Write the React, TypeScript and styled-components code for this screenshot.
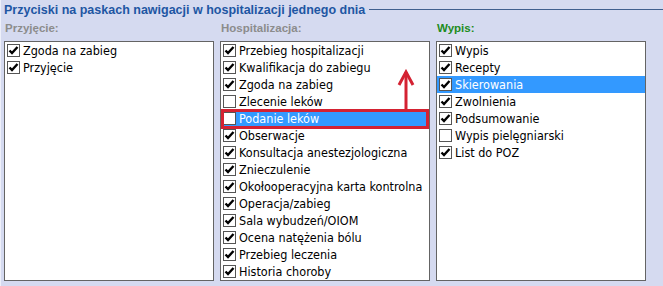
import React from "react";
import styled, { createGlobalStyle } from "styled-components";

const GlobalStyle = createGlobalStyle`
  html, body {
    margin: 0;
    padding: 0;
    background: #d5daf0;
  }
  body {
    font-family: Tahoma, "Liberation Sans", Arial, sans-serif;
    font-size: 12px;
    color: #000;
  }
`;

type Item = { label: string; checked: boolean; selected?: boolean };

const przyjecie: Item[] = [
  { label: "Zgoda na zabieg", checked: true },
  { label: "Przyjęcie", checked: true },
];

const hospitalizacja: Item[] = [
  { label: "Przebieg hospitalizacji", checked: true },
  { label: "Kwalifikacja do zabiegu", checked: true },
  { label: "Zgoda na zabieg", checked: true },
  { label: "Zlecenie leków", checked: false },
  { label: "Podanie leków", checked: false, selected: true },
  { label: "Obserwacje", checked: true },
  { label: "Konsultacja anestezjologiczna", checked: true },
  { label: "Znieczulenie", checked: true },
  { label: "Okołooperacyjna karta kontrolna", checked: true },
  { label: "Operacja/zabieg", checked: true },
  { label: "Sala wybudzeń/OIOM", checked: true },
  { label: "Ocena natężenia bólu", checked: true },
  { label: "Przebieg leczenia", checked: true },
  { label: "Historia choroby", checked: true },
];

const wypis: Item[] = [
  { label: "Wypis", checked: true },
  { label: "Recepty", checked: true },
  { label: "Skierowania", checked: true, selected: true },
  { label: "Zwolnienia", checked: true },
  { label: "Podsumowanie", checked: true },
  { label: "Wypis pielęgniarski", checked: false },
  { label: "List do POZ", checked: true },
];

const Panel = styled.div`
  width: 663px;
  height: 286px;
  box-sizing: border-box;
  padding: 3px 0 0 3px;
  border-left: 1px solid #eef0fa;
`;

const GroupHeader = styled.div`
  display: flex;
  align-items: center;
  height: 13px;
`;

const GroupTitle = styled.span`
  font-family: "Liberation Sans", Arial, sans-serif;
  font-weight: bold;
  font-size: 12.5px;
  color: #1e56a3;
  white-space: nowrap;
`;

const GroupLine = styled.div`
  flex: 1;
  height: 1px;
  margin-left: 4px;
  background: #3f5f8f;
`;

const Columns = styled.div`
  display: grid;
  grid-template-columns: repeat(3, 210px);
  column-gap: 6px;
  margin-top: 6px;
`;

const Column = styled.div`
  display: flex;
  flex-direction: column;
`;

const ColumnLabel = styled.div<{ $tone: "grey" | "green" }>`
  font-family: "Liberation Sans", Arial, sans-serif;
  font-weight: bold;
  font-size: 11.5px;
  height: 13px;
  line-height: 13px;
  padding-left: 1px;
  margin-bottom: 6px;
  color: ${(p) => (p.$tone === "green" ? "#1d8c1d" : "#8c8c8c")};
`;

const ListBox = styled.div`
  position: relative;
  height: 240px;
  box-sizing: border-box;
  border: 1px solid #646464;
  background: #fff;
`;

const Row = styled.div<{ $selected?: boolean }>`
  display: flex;
  align-items: center;
  height: 17px;
  padding-left: 2px;
  background: ${(p) => (p.$selected ? "#3399ff" : "transparent")};
  color: ${(p) => (p.$selected ? "#fff" : "#000")};
`;

const Box = styled.span`
  display: inline-flex;
  align-items: center;
  justify-content: center;
  width: 13px;
  height: 13px;
  box-sizing: border-box;
  border: 1px solid #555;
  background: #fff;
  flex-shrink: 0;
`;

const RowText = styled.span`
  margin-left: 3px;
  font-family: Tahoma, "DejaVu Sans Condensed", "Liberation Sans", sans-serif;
  font-size: 12.5px;
  white-space: nowrap;
`;

const Highlight = styled.div`
  position: absolute;
  left: 0;
  top: 67px;
  width: 208px;
  height: 20px;
  box-sizing: border-box;
  border: 3px solid #d42232;
  pointer-events: none;
`;

const Arrow = styled.svg`
  position: absolute;
  left: 176px;
  top: 27px;
`;

const Check = () => (
  <svg width="11" height="11" viewBox="0 0 11 11">
    <path d="M1.5 5.5 L4 8 L9.5 2" fill="none" stroke="#000" strokeWidth="2.4" />
  </svg>
);

const List: React.FC<{ items: Item[]; children?: React.ReactNode }> = ({ items, children }) => (
  <ListBox>
    {items.map((it) => (
      <Row key={it.label} $selected={it.selected}>
        <Box>{it.checked && <Check />}</Box>
        <RowText>{it.label}</RowText>
      </Row>
    ))}
    {children}
  </ListBox>
);

const App: React.FC = () => {
  return (
    <>
      <GlobalStyle />
      <Panel>
        <GroupHeader>
          <GroupTitle>Przyciski na paskach nawigacji w hospitalizacji jednego dnia</GroupTitle>
          <GroupLine />
        </GroupHeader>
        <Columns>
          <Column>
            <ColumnLabel $tone="grey">Przyjęcie:</ColumnLabel>
            <List items={przyjecie} />
          </Column>
          <Column>
            <ColumnLabel $tone="grey">Hospitalizacja:</ColumnLabel>
            <List items={hospitalizacja}>
              <Highlight />
              <Arrow width="18" height="42" viewBox="0 0 18 42">
                <path d="M9 3 V41" stroke="#d42232" strokeWidth="3" fill="none" />
                <path d="M2 16 L9 3 L16 16" stroke="#d42232" strokeWidth="3" fill="none" />
              </Arrow>
            </List>
          </Column>
          <Column>
            <ColumnLabel $tone="green">Wypis:</ColumnLabel>
            <List items={wypis} />
          </Column>
        </Columns>
      </Panel>
    </>
  );
};

export default App;
